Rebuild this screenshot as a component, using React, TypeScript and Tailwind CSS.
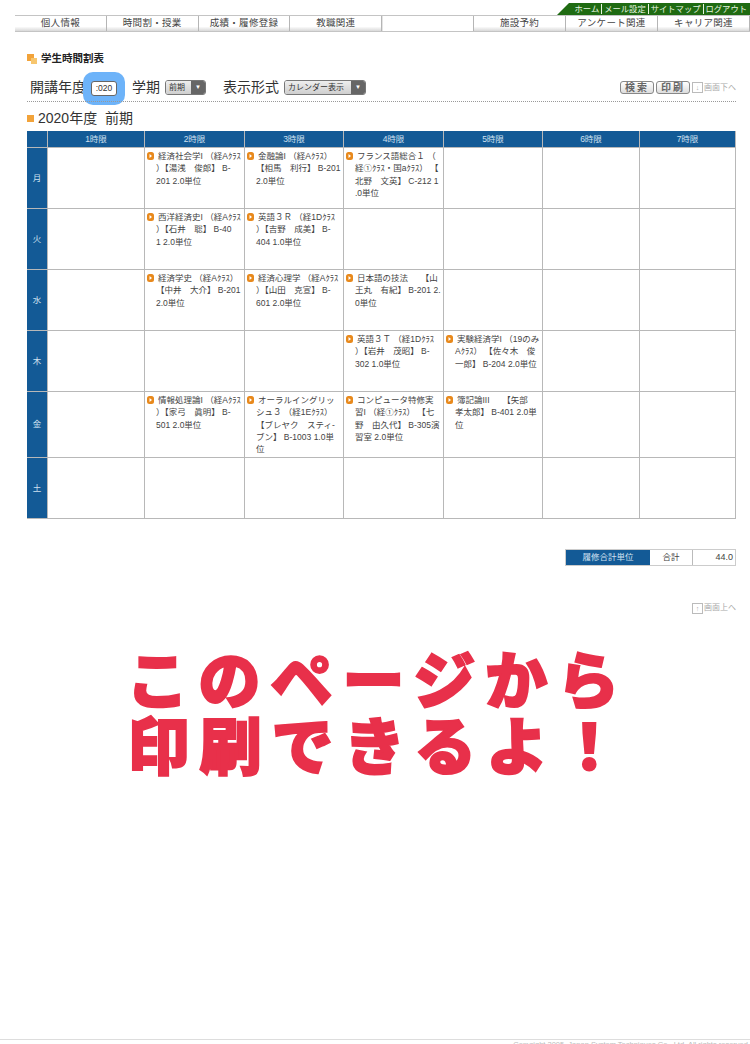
import { Fragment } from 'react';

const FONT = "font-['Liberation_Sans','Noto_Sans_CJK_JP',sans-serif]";

const navLeft = ['個人情報', '時間割・授業', '成績・履修登録', '教職関連'];
const navRight = ['施設予約', 'アンケート関連', 'キャリア関連'];
const topLinks = ['ホーム', 'メール設定', 'サイトマップ', 'ログアウト'];
const periods = ['1時限', '2時限', '3時限', '4時限', '5時限', '6時限', '7時限'];

interface Row {
  day: string;
  height: string;
  cells: (string[] | null)[];
}

const rows: Row[] = [
  {
    day: '月',
    height: 'h-[60px]',
    cells: [
      null,
      ['経済社会学I （経Aｸﾗｽ', '）【湯浅　俊郎】 B-', '201 2.0単位'],
      ['金融論I （経Aｸﾗｽ）', '【相馬　利行】 B-201', '2.0単位'],
      ['フランス語総合１ （', '経①ｸﾗｽ・国aｸﾗｽ） 【', '北野　文英】 C-212 1', '.0単位'],
      null,
      null,
      null,
    ],
  },
  {
    day: '火',
    height: 'h-[60px]',
    cells: [
      null,
      ['西洋経済史I （経Aｸﾗｽ', '）【石井　聡】 B-40', '1 2.0単位'],
      ['英語３Ｒ （経1Dｸﾗｽ', '）【吉野　成美】 B-', '404 1.0単位'],
      null,
      null,
      null,
      null,
    ],
  },
  {
    day: '水',
    height: 'h-[60px]',
    cells: [
      null,
      ['経済学史 （経Aｸﾗｽ）', '【中井　大介】 B-201', '2.0単位'],
      ['経済心理学 （経Aｸﾗｽ', '）【山田　克宣】 B-', '601 2.0単位'],
      ['日本語の技法　　【山', '王丸　有紀】 B-201 2.', '0単位'],
      null,
      null,
      null,
    ],
  },
  {
    day: '木',
    height: 'h-[60px]',
    cells: [
      null,
      null,
      null,
      ['英語３Ｔ （経1Dｸﾗｽ', '）【岩井　茂昭】 B-', '302 1.0単位'],
      ['実験経済学I （19のみ', 'Aｸﾗｽ） 【佐々木　俊', '一郎】 B-204 2.0単位'],
      null,
      null,
    ],
  },
  {
    day: '金',
    height: 'h-[65px]',
    cells: [
      null,
      ['情報処理論I （経Aｸﾗｽ', '）【家弓　眞明】 B-', '501 2.0単位'],
      ['オーラルイングリッ', 'シュ３ （経1Eｸﾗｽ）', '【ブレヤク　スティ-', 'ブン】 B-1003 1.0単', '位'],
      ['コンピュータ特修実', '習I （経①ｸﾗｽ） 【七', '野　由久代】 B-305演', '習室 2.0単位'],
      ['簿記論III　　【矢部', '孝太郎】 B-401 2.0単', '位'],
      null,
      null,
    ],
  },
  {
    day: '土',
    height: 'h-[60px]',
    cells: [null, null, null, null, null, null, null],
  },
];

function NavTab({ label }: { label: string }) {
  return (
    <div className="w-[92px] h-full flex items-center justify-center border-r border-[#b5b5b5] bg-gradient-to-b from-white from-70% to-[#d8d8d8] text-[9.5px] text-[#444] tracking-[0.3px]">
      {label}
    </div>
  );
}

function SelectBox({ label, width }: { label: string; width: string }) {
  return (
    <div className={`${width} h-[15px] flex rounded-[3px] border border-[#777] overflow-hidden`}>
      <div className="flex-1 bg-gradient-to-b from-[#eee] to-[#cfcfcf] text-[8px] leading-[13px] text-[#333] pl-[3px] whitespace-nowrap">
        {label}
      </div>
      <div className="w-[14px] bg-[#666] flex items-center justify-center text-[6px] text-white">▼</div>
    </div>
  );
}

function PageJump({ arrow, label }: { arrow: string; label: string }) {
  return (
    <div className="flex items-center text-[8px] text-[#aaa]">
      <span className="w-[11px] h-[11px] border border-[#bbb] flex items-center justify-center text-[7px] leading-none mr-px">
        {arrow}
      </span>
      {label}
    </div>
  );
}

function SmallButton({ label }: { label: string }) {
  return (
    <div className="w-[34px] h-[13px] border border-[#888] rounded-[3px] bg-gradient-to-b from-white to-[#ddd] flex items-center justify-center text-[10px] font-bold text-[#666] tracking-[2px]">
      {label}
    </div>
  );
}

function Bullet() {
  return (
    <svg width="7" height="8" viewBox="0 0 7 8" className="inline-block mr-[4px] align-[-1px]">
      <rect x="0" y="0" width="7" height="8" rx="2.5" fill="#e8891c" />
      <path d="M2.5 2 L5 4 L2.5 6 Z" fill="#fff" />
    </svg>
  );
}

function Course({ lines }: { lines: string[] }) {
  return (
    <div className="pt-[2px] pl-[2px] text-[8.5px] leading-[12.3px] text-[#444] whitespace-nowrap">
      {lines.map((line, i) => (
        <div key={i} className={i === 0 ? '' : 'pl-[9px]'}>
          {i === 0 && <Bullet />}
          {line}
        </div>
      ))}
    </div>
  );
}

export default function App() {
  return (
    <div className={`${FONT} w-[750px] h-[1044px] overflow-hidden bg-white flex flex-col`}>
      <div className="h-[15px] pt-[3px] flex justify-end">
        <div className="w-[193px] h-[12px] bg-[#1f6b12] [clip-path:polygon(12px_0,100%_0,100%_100%,0_100%)] text-[8.3px] leading-[12px] text-[#e8f5e0] flex justify-end pr-[3px] whitespace-nowrap">
          {topLinks.map((link, i) => (
            <span key={link} className={i === 0 ? '' : 'ml-[2px] pl-[2px] border-l border-[#e8f5e0] my-[1px] leading-[10px]'}>
              {link}
            </span>
          ))}
        </div>
      </div>
      <div className="ml-[15px] h-[17px] flex border-y border-[#c4c4c4]">
        {navLeft.map(label => (
          <NavTab key={label} label={label} />
        ))}
        <div className="w-[91px] border-l border-[#e4e4e4]" />
        <div className="flex-1 flex border-l border-[#b5b5b5]">
          {navRight.map(label => (
            <NavTab key={label} label={label} />
          ))}
        </div>
      </div>

      <div className="ml-[27px] mr-[14px] flex flex-col">
        <div className="mt-[21px] h-[12px] flex items-center">
          <div className="relative w-[10px] h-[10px] mr-[4px]">
            <div className="absolute left-0 top-0 w-[7px] h-[7px] bg-[#f2a33a]" />
            <div className="absolute right-0 bottom-0 w-[6px] h-[6px] bg-[#f7c66e]" />
          </div>
          <span className="text-[10.5px] font-bold text-[#222]">学生時間割表</span>
        </div>

        <div className="mt-[7px] h-[33px] flex items-center pl-[3px] pr-0 text-[14px] text-[#333]">
          <span className="pb-[3px]">開講年度</span>
          <div className="-ml-[3px] w-[42px] h-[33px] rounded-[10px] bg-[#6db3f9] flex items-center justify-center">
            <div className="w-[26px] h-[15px] bg-white border border-[#666] rounded-[3px] text-[8.5px] leading-[13px] text-[#333] text-center">
              :020
            </div>
          </div>
          <span className="ml-[7px] pb-[3px]">学期</span>
          <div className="ml-[5px] pb-[2px]">
            <SelectBox label="前期" width="w-[41px]" />
          </div>
          <span className="ml-[17px] pb-[3px]">表示形式</span>
          <div className="ml-[5px] pb-[2px]">
            <SelectBox label="カレンダー表示" width="w-[82px]" />
          </div>
          <div className="ml-auto flex items-center gap-[2px] pb-[2px]">
            <SmallButton label="検索" />
            <SmallButton label="印刷" />
            <PageJump arrow="↓" label="画面下へ" />
          </div>
        </div>

        <div className="mt-[-4px] border-b border-dotted border-[#999]" />

        <div className="mt-[8px] h-[17px] flex items-center">
          <div className="w-[7px] h-[7px] bg-[#f2a33a] mr-[4px]" />
          <span className="text-[14px] text-[#333] whitespace-pre">2020年度  前期</span>
        </div>

        <div className="mt-[4px] grid grid-cols-[20px_96px_99px_98px_99px_98px_96px_95px] gap-px bg-[#b8b8b8] pr-px pb-px">
          <div className="h-[16px] bg-[#135a96]" />
          {periods.map(p => (
            <div key={p} className="h-[16px] bg-[#135a96] flex items-center justify-center text-[8.5px] text-[#cfe0f0]">
              {p}
            </div>
          ))}
          {rows.map(row => (
            <Fragment key={row.day}>
              <div className={`${row.height} bg-[#135a96] flex items-center justify-center text-[8.5px] text-[#cfe0f0]`}>
                {row.day}
              </div>
              {row.cells.map((lines, i) => (
                <div key={i} className={`${row.height} bg-white overflow-hidden`}>
                  {lines && <Course lines={lines} />}
                </div>
              ))}
            </Fragment>
          ))}
        </div>

        <div className="mt-[30px] self-end flex h-[17px] border border-[#ccc] text-[8.5px] text-[#444]">
          <div className="w-[84px] bg-[#135a96] text-[#cfe0f0] flex items-center justify-center">履修合計単位</div>
          <div className="w-[43px] border-r border-[#bbb] flex items-center justify-center">合計</div>
          <div className="w-[42px] flex items-center justify-end pr-[2px] text-[9px]">44.0</div>
        </div>

        <div className="mt-[36px] self-end">
          <PageJump arrow="↑" label="画面上へ" />
        </div>
      </div>

      <div className="mt-[32px] flex flex-col items-center font-['Noto_Sans_CJK_JP',sans-serif] font-black text-[#e8304a] [-webkit-text-stroke:2px_#e8304a]">
        <div className="text-[62px] leading-[62px] tracking-[10px] whitespace-nowrap ml-[6px]">このページから</div>
        <div className="text-[62px] leading-[70px] tracking-[10px] whitespace-nowrap ml-[8px]">印刷できるよ！</div>
      </div>

      <div className="mt-auto h-[5px] border-t border-[#ddd] text-right text-[7.5px] leading-[9px] text-[#bbb] whitespace-nowrap overflow-hidden">
        Copyright 2005, Japan System Techniques Co., Ltd. All rights reserved.
      </div>
    </div>
  );
}
